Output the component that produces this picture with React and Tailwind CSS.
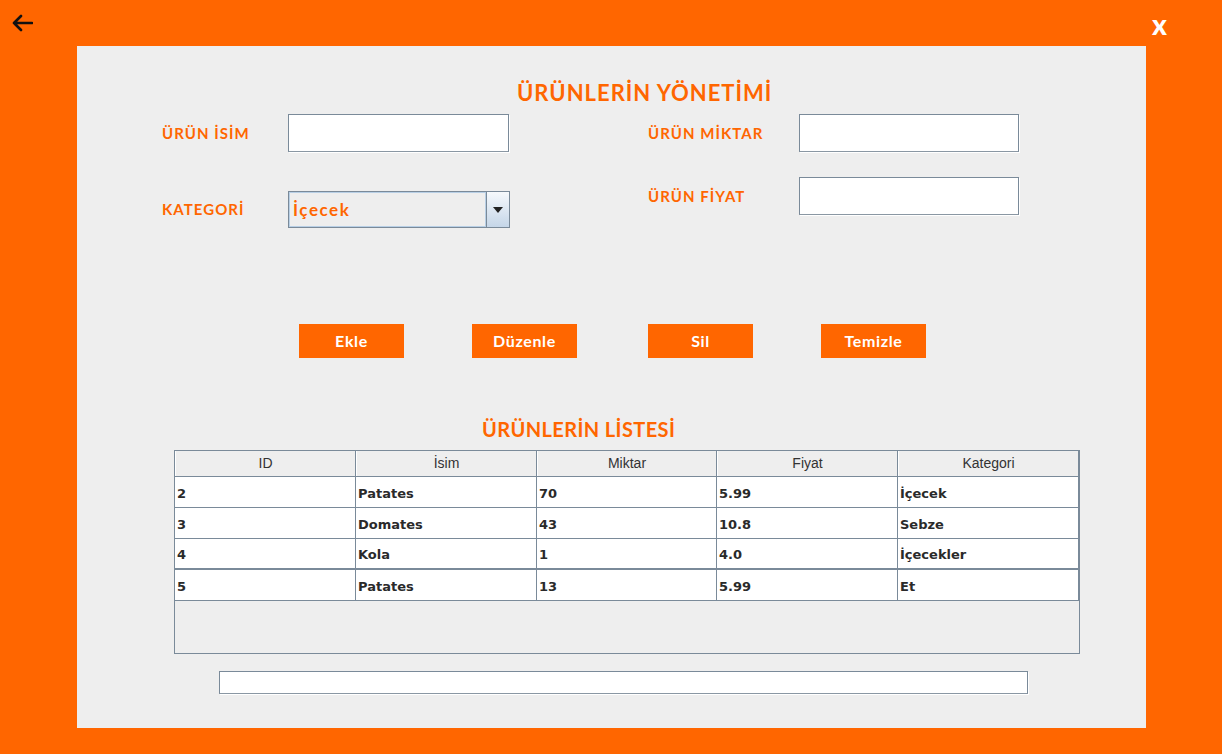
import React from "react";

const font = { fontFamily: "'Lato', 'Open Sans', 'DejaVu Sans', sans-serif" };

const rows = [
  { id: "2", name: "Patates", qty: "70", price: "5.99", cat: "İçecek" },
  { id: "3", name: "Domates", qty: "43", price: "10.8", cat: "Sebze" },
  { id: "4", name: "Kola", qty: "1", price: "4.0", cat: "İçecekler" },
  { id: "5", name: "Patates", qty: "13", price: "5.99", cat: "Et" },
];

function Field({ w = "w-[221px]", h = "h-[38px]" }) {
  return (
    <div className={`${w} ${h} bg-white border border-[#7a8a99] border-b-[#8a97a3] shadow-[1px_1px_0_#ffffff]`} />
  );
}

function Label({ children, w }) {
  return (
    <div className={`${w} text-[15px] font-bold tracking-[0.07em] text-[#ff6600]`}>
      {children}
    </div>
  );
}

export default function App() {
  return (
    <div className="w-[1222px] h-[754px] bg-[#ff6600] flex flex-col overflow-hidden" style={font}>
      {/* top bar */}
      <div className="h-[46px] flex items-start justify-between pl-[11px] pr-[55px]">
        <svg width="22" height="18" viewBox="0 0 22 18" className="mt-[14px]">
          <path d="M10 2 L3 9 L10 16 M3 9 H21" fill="none" stroke="#111" strokeWidth="2.6" strokeLinecap="round" strokeLinejoin="round" />
        </svg>
        <span className="text-white font-black text-[28px] leading-none mt-[10px]">x</span>
      </div>

      {/* panel */}
      <div className="ml-[77px] w-[1069px] h-[682px] bg-[#eeeeee] flex flex-col">
        <div className="h-[68px] flex items-end pb-[10px]">
          <div className="ml-[440px] text-[22px] font-bold tracking-[0.045em] text-[#ff6600] leading-none">
            ÜRÜNLERİN YÖNETİMİ
          </div>
        </div>

        <div className="flex h-[210px]">
          {/* left column */}
          <div className="ml-[85px] w-[486px] flex flex-col">
            <div className="flex items-center h-[38px]">
              <Label w="w-[126px]">ÜRÜN İSİM</Label>
              <Field />
            </div>
            <div className="flex items-center h-[37px] mt-[39px]">
              <Label w="w-[126px]">KATEGORİ</Label>
              <div className="w-[222px] h-[37px] border border-[#7a8a99] flex">
                <div className="flex-1 border border-[#b8cfe5] bg-[#eeeeee] flex items-center pl-[3px] text-[17px] font-bold tracking-[0.09em] text-[#ff6600]">
                  İçecek
                </div>
                <div className="w-[23px] border-l border-[#7a8a99] bg-gradient-to-b from-[#f6f9fc] to-[#c5d6e8] flex items-center justify-center">
                  <svg width="10" height="6" viewBox="0 0 10 6">
                    <path d="M0 0 H10 L5 6 Z" fill="#222" />
                  </svg>
                </div>
              </div>
            </div>
          </div>
          {/* right column */}
          <div className="flex flex-col">
            <div className="flex items-center h-[38px]">
              <Label w="w-[151px]">ÜRÜN MİKTAR</Label>
              <Field w="w-[220px]" />
            </div>
            <div className="flex items-center h-[38px] mt-[25px]">
              <Label w="w-[151px]">ÜRÜN FİYAT</Label>
              <Field w="w-[220px]" />
            </div>
          </div>
        </div>

        {/* buttons */}
        <div className="flex pl-[222px]">
          {[
            ["Ekle", ""],
            ["Düzenle", "ml-[68px]"],
            ["Sil", "ml-[71px]"],
            ["Temizle", "ml-[68px]"],
          ].map(([t, m]) => (
            <button
              key={t}
              className={`${m} w-[105px] h-[34px] bg-[#ff6600] text-white text-[16px] font-bold tracking-[0.04em] flex items-center justify-center`}
            >
              {t}
            </button>
          ))}
        </div>

        <div className="h-[92px] flex items-end pb-[11px]">
          <div className="ml-[405px] text-[20px] font-bold tracking-[0.02em] text-[#ff6600] leading-none">
            ÜRÜNLERİN LİSTESİ
          </div>
        </div>

        {/* table */}
        <div className="ml-[97px] w-[906px] h-[204px] border border-[#7a8a99] bg-[#eeeeee]">
          <div className="grid grid-cols-[181px_181px_180px_181px_181px] h-[26px] border-b border-[#7a8a99]">
            {["ID", "İsim", "Miktar", "Fiyat", "Kategori"].map((h) => (
              <div
                key={h}
                className="border-r border-[#7a8a99] border-l border-l-white flex items-center justify-center text-[14px] text-[#333]"
                style={{ fontFamily: "'Liberation Sans', Arial, sans-serif" }}
              >
                {h}
              </div>
            ))}
          </div>
          {rows.map((r, i) => (
            <div
              key={r.id}
              className={`grid grid-cols-[181px_181px_180px_181px_181px] h-[31px] bg-white border-[#7a8a99] ${
                i === 2 ? "border-b-2" : "border-b"
              }`}
            >
              {[r.id, r.name, r.qty, r.price, r.cat].map((c, j) => (
                <div
                  key={j}
                  className="border-r border-[#7a8a99] flex items-center pl-[2px] pt-[3px] text-[13px] font-bold text-[#2a2a2a]"
                  style={{ fontFamily: "'DejaVu Sans', sans-serif" }}
                >
                  {c}
                </div>
              ))}
            </div>
          ))}
        </div>

        <div className="ml-[142px] mt-[17px]">
          <Field w="w-[809px]" h="h-[23px]" />
        </div>
      </div>
    </div>
  );
}
